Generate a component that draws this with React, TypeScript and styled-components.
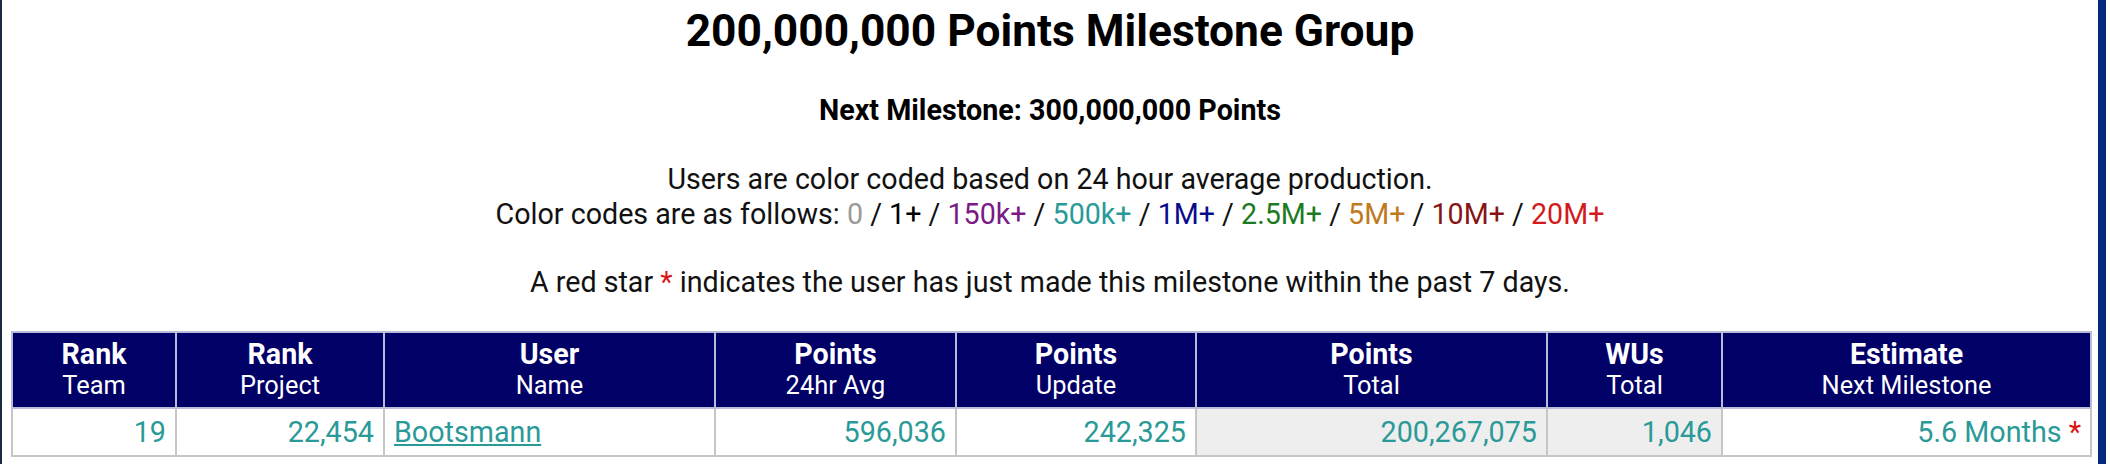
import styled, { createGlobalStyle } from "styled-components";

const GlobalStyle = createGlobalStyle`
  html, body {
    margin: 0;
    padding: 0;
    background: #ffffff;
  }
  body {
    font-family: Roboto, "Liberation Sans", Arial, sans-serif;
    color: #000000;
  }
`;

const codes = [
  { label: "0", color: "#9a9a9a" },
  { label: "1+", color: "#000000" },
  { label: "150k+", color: "#7a1a86" },
  { label: "500k+", color: "#2a9a98" },
  { label: "1M+", color: "#0a0a8c" },
  { label: "2.5M+", color: "#1c7a22" },
  { label: "5M+", color: "#c07a1e" },
  { label: "10M+", color: "#861414" },
  { label: "20M+", color: "#d21c1c" },
];

const columns = [
  { main: "Rank", sub: "Team", width: 164 },
  { main: "Rank", sub: "Project", width: 208 },
  { main: "User", sub: "Name", width: 331 },
  { main: "Points", sub: "24hr Avg", width: 241 },
  { main: "Points", sub: "Update", width: 240 },
  { main: "Points", sub: "Total", width: 351 },
  { main: "WUs", sub: "Total", width: 175 },
  { main: "Estimate", sub: "Next Milestone", width: 369 },
];

const App = () => {
  return (
    <Page>
      <GlobalStyle />
      <Title>200,000,000 Points Milestone Group</Title>
      <NextMilestone>Next Milestone: 300,000,000 Points</NextMilestone>
      <Legend>
        Users are color coded based on 24 hour average production.
        <br />
        Color codes are as follows:{" "}
        {codes.map((c, i) => (
          <span key={c.label}>
            <Code $color={c.color}>{c.label}</Code>
            {i < codes.length - 1 ? " / " : ""}
          </span>
        ))}
      </Legend>
      <Note>
        A red star <Star>*</Star> indicates the user has just made this
        milestone within the past 7 days.
      </Note>
      <TableWrap>
        <Table>
          <colgroup>
            {columns.map((c, i) => (
              <col key={i} style={{ width: c.width }} />
            ))}
          </colgroup>
          <thead>
            <tr>
              {columns.map((c, i) => (
                <HeadCell key={i}>
                  <HeadMain>{c.main}</HeadMain>
                  <HeadSub>{c.sub}</HeadSub>
                </HeadCell>
              ))}
            </tr>
          </thead>
          <tbody>
            <tr>
              <Cell>19</Cell>
              <Cell>22,454</Cell>
              <Cell $align="left">
                <UserLink href="#">Bootsmann</UserLink>
              </Cell>
              <Cell>596,036</Cell>
              <Cell>242,325</Cell>
              <Cell $shaded>200,267,075</Cell>
              <Cell $shaded>1,046</Cell>
              <Cell>
                5.6 Months <Star>*</Star>
              </Cell>
            </tr>
          </tbody>
        </Table>
      </TableWrap>
    </Page>
  );
};

export default App;

const Page = styled.div`
  box-sizing: border-box;
  min-height: 100vh;
  padding-top: 5px;
  border-left: 2px solid #1b2b45;
  border-right: 8px solid #022b7b;
  text-align: center;
`;

const Title = styled.h1`
  margin: 0;
  font-size: 44.3px;
  line-height: 52px;
  font-weight: 700;
`;

const NextMilestone = styled.h2`
  margin: 36px 0 0;
  font-size: 28.7px;
  line-height: 34px;
  font-weight: 700;
`;

const Legend = styled.p`
  margin: 35px 0 0;
  font-size: 28.65px;
  line-height: 35px;
  color: #111111;
`;

const Code = styled.span<{ $color: string }>`
  color: ${({ $color }) => $color};
`;

const Note = styled.p`
  margin: 33px 0 0;
  font-size: 28.65px;
  line-height: 35px;
  color: #111111;
`;

const Star = styled.span`
  color: #d81414;
`;

const TableWrap = styled.div`
  padding: 31px 8px 0 9px;
`;

const Table = styled.table`
  width: 100%;
  table-layout: fixed;
  border-collapse: collapse;
`;

const HeadCell = styled.th`
  background-color: #000066;
  color: #ffffff;
  border: 2px solid #b8bcd8;
  padding: 6px 4px;
  text-align: center;
`;

const HeadMain = styled.div`
  font-size: 28.6px;
  line-height: 31px;
  font-weight: 700;
`;

const HeadSub = styled.div`
  font-size: 25.4px;
  line-height: 31px;
  font-weight: 400;
`;

const Cell = styled.td<{ $align?: string; $shaded?: boolean }>`
  border: 2px solid #c6c6c6;
  padding: 6px 9px;
  font-size: 28.7px;
  line-height: 34px;
  color: #2a9a98;
  text-align: ${({ $align }) => $align || "right"};
  background-color: ${({ $shaded }) => ($shaded ? "#eeeeee" : "#ffffff")};
  white-space: nowrap;
`;

const UserLink = styled.a`
  color: #2a9a98;
  text-decoration: underline;
`;
